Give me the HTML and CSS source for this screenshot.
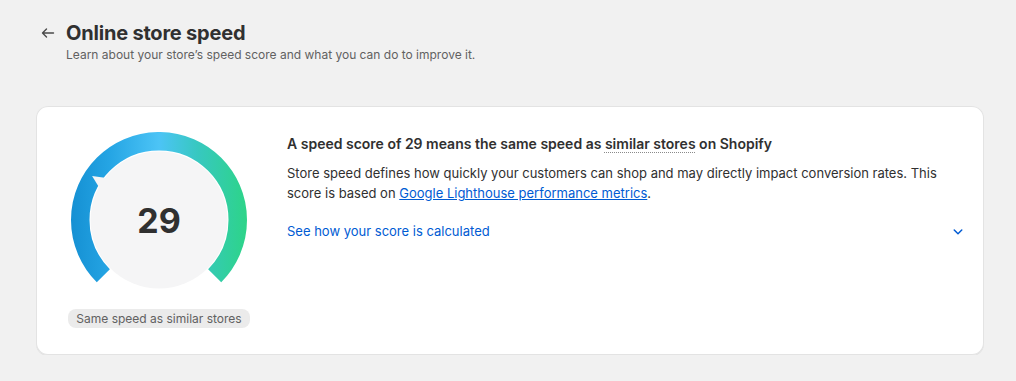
FILE: index.html
```html
<!DOCTYPE html>
<html lang="en">
  <head>
    <meta charset="UTF-8" />
    <meta name="viewport" content="width=device-width, initial-scale=1.0" />
    <title>Online store speed</title>
    <link rel="stylesheet" href="styles.css">
  </head>
  <body>
    <div class="page">
      <header class="page-header">
        <a href="#" class="back-btn" aria-label="Back">
          <svg width="20" height="20" viewBox="0 0 20 20" fill="none">
            <path d="M15.5 10H4.75M8.5 6L4.5 10l4 4" stroke="#4a4a4a" stroke-width="1.4" stroke-linecap="round" stroke-linejoin="round" />
          </svg>
        </a>
        <div class="title-wrap">
          <h1 class="page-title">Online store speed</h1>
          <p class="page-subtitle">Learn about your store’s speed score and what you can do to improve it.</p>
        </div>
      </header>

      <section class="card">
        <div class="gauge-col">
          <svg class="gauge" width="176" height="160" viewBox="0 0 176 160">
            <defs>
              <linearGradient id="arcGrad" x1="0" y1="0" x2="176" y2="0" gradientUnits="userSpaceOnUse">
                <stop offset="0" stop-color="#1590d3" />
                <stop offset="0.22" stop-color="#25a5e4" />
                <stop offset="0.5" stop-color="#4cc4f6" />
                <stop offset="0.72" stop-color="#37c8c0" />
                <stop offset="1" stop-color="#2dd488" />
              </linearGradient>
            </defs>
            <!-- 270deg arc, bottom-left round the top to bottom-right -->
            <path d="M32.32 143.68 A78.75 78.75 0 1 1 143.68 143.68" fill="none" stroke="url(#arcGrad)" stroke-width="18.5" />
            <circle cx="88" cy="88" r="68.5" fill="#f5f5f6" />
            <polygon points="21.1,44.1 39.2,46.6 30.6,59.6" fill="#f5f5f6" />
            <text x="88" y="101" text-anchor="middle" class="score">29</text>
          </svg>
          <span class="badge">Same speed as similar stores</span>
        </div>

        <div class="info-col">
          <h2 class="info-title">A speed score of 29 means the same speed as <span class="dotted">similar stores</span> on Shopify</h2>
          <p class="info-text">
            Store speed defines how quickly your customers can shop and may directly impact conversion rates. This
            score is based on <a href="#" class="link">Google Lighthouse performance metrics</a>.
          </p>
          <div class="calc-row">
            <a href="#" class="calc-link">See how your score is calculated</a>
            <svg width="20" height="20" viewBox="0 0 20 20">
              <path d="M5.72 8.47a.75.75 0 0 1 1.06 0l3.22 3.22 3.22-3.22a.75.75 0 1 1 1.06 1.06l-3.75 3.75a.75.75 0 0 1-1.06 0l-3.75-3.75a.75.75 0 0 1 0-1.06Z" fill="#005bd3" />
            </svg>
          </div>
        </div>
      </section>
    </div>
  </body>
</html>
```

FILE: styles.css
```css
body {
  margin: 0;
  background-color: #f1f1f1;
  color: #303030;
  font-family: Inter, "Noto Sans", Arial, sans-serif;
}

.page {
  padding: 21px 32px 0 36px;
}

/* Header */
.page-header {
  display: flex;
  align-items: flex-start;
  gap: 8px;
  padding-left: 2px;
}

.back-btn {
  display: flex;
  align-items: center;
  height: 24px;
}

.page-title {
  margin: 0;
  font-size: 20px;
  line-height: 24px;
  font-weight: 700;
  letter-spacing: -0.2px;
  color: #303030;
}

.page-subtitle {
  margin: 0;
  font-size: 12px;
  line-height: 20px;
  color: #616161;
}

/* Card */
.card {
  margin-top: 41px;
  background-color: #fff;
  border-radius: 12px;
  box-shadow: 0 1px 0 rgba(26, 26, 26, 0.07), inset 0 0 0 1px rgba(204, 204, 204, 0.55);
  padding: 26px 16px 27px 31px;
  display: flex;
  gap: 36px;
}

.gauge-col {
  width: 184px;
  flex-shrink: 0;
  display: flex;
  flex-direction: column;
  align-items: center;
}

.gauge {
  display: block;
}

.score {
  font-family: Inter, "Noto Sans", Arial, sans-serif;
  font-size: 34px;
  font-weight: 700;
  fill: #303030;
}

.badge {
  margin-top: 17px;
  padding: 0 8px;
  background-color: #ebebeb;
  border-radius: 8px;
  font-size: 12px;
  line-height: 19px;
  color: #616161;
  white-space: nowrap;
}

.info-col {
  flex: 1;
  padding-top: 2px;
}

.info-title {
  margin: 0;
  font-size: 14px;
  line-height: 20px;
  font-weight: 600;
}

.dotted {
  text-decoration: underline dotted #8a8a8a;
  text-decoration-thickness: 1px;
  text-underline-offset: 3px;
}

.info-text {
  margin: 9px 0 0;
  font-size: 13px;
  line-height: 20px;
}

.link {
  color: #005bd3;
}

.calc-row {
  margin-top: 18px;
  display: flex;
  justify-content: space-between;
  align-items: center;
}

.calc-link {
  font-size: 13px;
  line-height: 20px;
  color: #005bd3;
  text-decoration: none;
}
```
